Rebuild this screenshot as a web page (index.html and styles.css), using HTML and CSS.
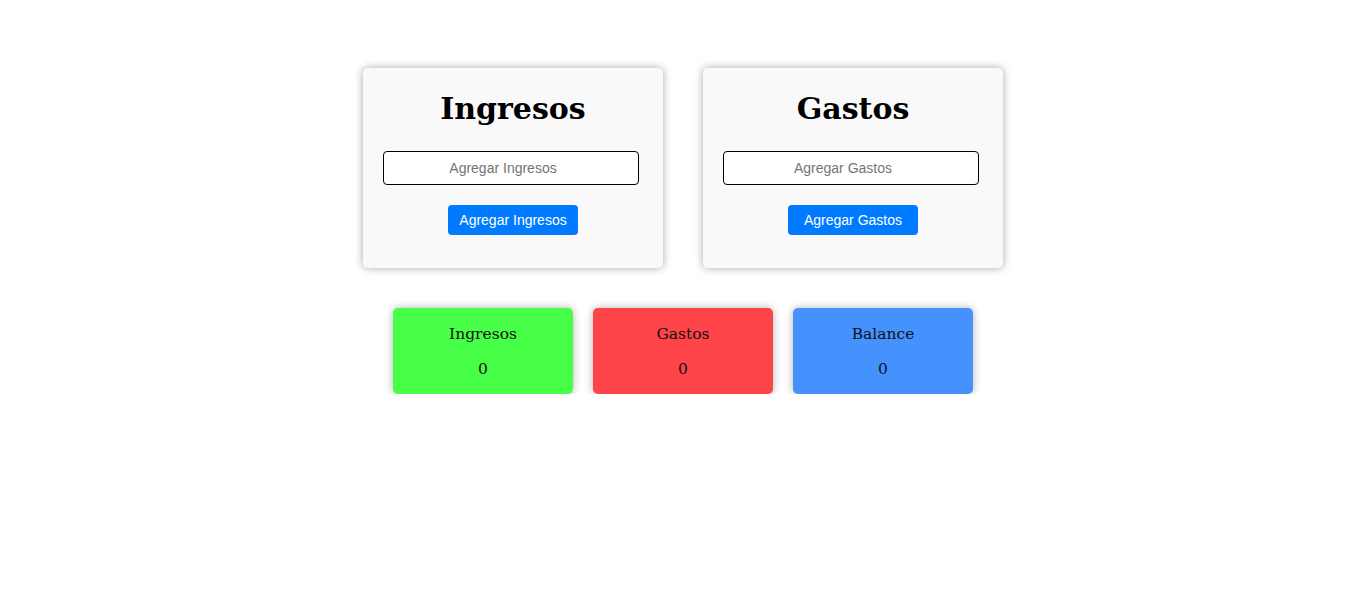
FILE: index.html
```html
<!DOCTYPE html>
<html lang="es">
<head>
<meta charset="utf-8">
<title>Presupuesto</title>
<link rel="stylesheet" href="styles.css">
</head>
<body>
<main class="app">
  <section class="forms">
    <div class="card">
      <h1 class="card-title">Ingresos</h1>
      <input class="card-input" type="text" placeholder="Agregar Ingresos">
      <button class="card-btn">Agregar Ingresos</button>
    </div>
    <div class="card">
      <h1 class="card-title">Gastos</h1>
      <input class="card-input" type="text" placeholder="Agregar Gastos">
      <button class="card-btn">Agregar Gastos</button>
    </div>
  </section>
  <section class="summary">
    <div class="stat stat-green"><p class="stat-label">Ingresos</p><p class="stat-value">0</p></div>
    <div class="stat stat-red"><p class="stat-label">Gastos</p><p class="stat-value">0</p></div>
    <div class="stat stat-blue"><p class="stat-label">Balance</p><p class="stat-value">0</p></div>
  </section>
</main>
</body>
</html>
```
FILE: styles.css
```css
* { box-sizing: border-box; }
html, body { margin: 0; padding: 0; background: #fff; }
body { font-family: "DejaVu Serif", "Liberation Serif", serif; color: #000; }
.app {
  display: flex;
  flex-direction: column;
  align-items: center;
  padding-top: 68px;
}
.forms {
  display: flex;
  gap: 40px;
}
.card {
  width: 300px;
  height: 200px;
  background: #f9f9f9;
  border-radius: 5px;
  box-shadow: 0 0 8px rgba(0,0,0,0.35);
  padding: 20px 20px;
  display: flex;
  flex-direction: column;
  align-items: center;
}
.card-title {
  margin: 0;
  font-size: 30px;
  font-weight: bold;
  line-height: 40px;
  height: 63px;
  padding-top: 1px;
}
.card-input {
  width: 256px;
  height: 34px;
  border: 1px solid #000;
  border-radius: 4px;
  background: #fff;
  font-family: "Liberation Sans", Arial, sans-serif;
  font-size: 14px;
  text-align: center;
  padding: 0 20px 0 4px;
  margin-left: -4px;
}
.card-input::placeholder { color: #757575; }
.card-btn {
  margin-top: 20px;
  width: 130px;
  height: 30px;
  border: none;
  border-radius: 4px;
  background: #007bff;
  color: #fff;
  font-family: "Liberation Sans", Arial, sans-serif;
  font-size: 14px;
  padding: 0 0 1px 0;
}
.summary {
  display: flex;
  gap: 20px;
  margin-top: 40px;
}
.stat {
  width: 180px;
  height: 86px;
  border-radius: 5px;
  box-shadow: 0 0 8px rgba(0,0,0,0.3);
  display: flex;
  flex-direction: column;
  align-items: center;
  padding-top: 16px;
  color: #111;
}
.stat p { margin: 0; font-size: 15.5px; line-height: 20px; }
.stat-value { margin-top: 15px !important; }
.stat-green { background: #48ff48; }
.stat-red { background: #ff4449; }
.stat-blue { background: #4592ff; }
```
